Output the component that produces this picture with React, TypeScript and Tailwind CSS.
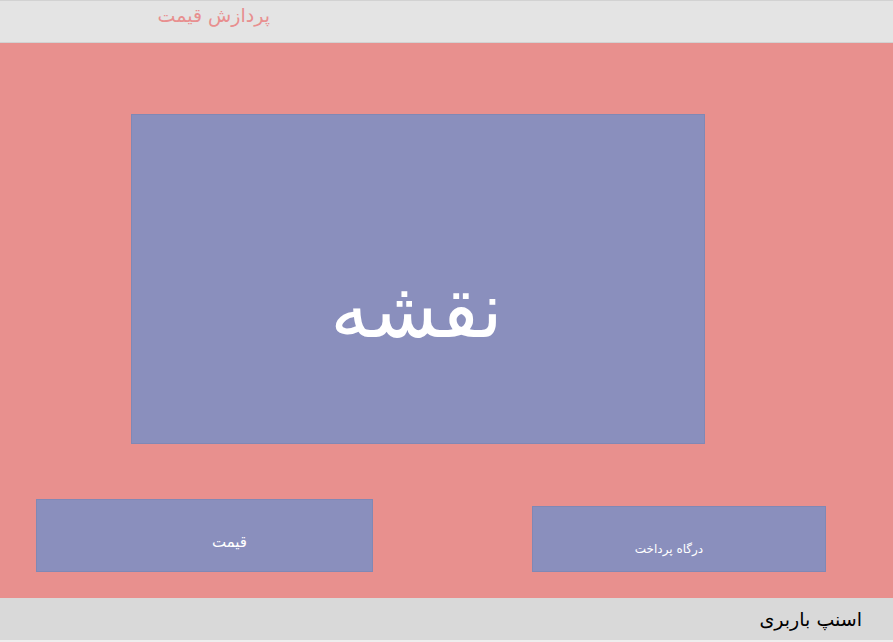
export default function App() {
  return (
    <div className="flex h-[642px] w-[893px] flex-col font-['DejaVu_Sans',sans-serif]">
      <header className="h-[43px] shrink-0 border-t border-b border-[#d2d2d2] bg-[#e4e4e4]">
        <div dir="rtl" className="ml-[154px] mt-[1px] w-[116px] text-[19px] leading-[26px] text-[#e88f8f]">
          پردازش قیمت
        </div>
      </header>
      <main className="flex flex-1 flex-col bg-[#e8908e]">
        <div className="ml-[131px] mt-[71px] flex h-[330px] w-[574px] items-center justify-center border border-[#8088b5] bg-[#8a8fbd]">
          <span dir="rtl" className="ml-[-3px] mt-[62px] text-[78px] leading-none text-white">
            نقشه
          </span>
        </div>
        <div className="mt-auto mb-[26px] flex items-end">
          <div className="ml-[36px] flex h-[73px] w-[337px] items-center justify-center border border-[#8088b5] bg-[#8a8fbd]">
            <span dir="rtl" className="mt-[14px] ml-[50px] text-[15px] text-white">
              قیمت
            </span>
          </div>
          <div className="ml-[159px] flex h-[66px] w-[294px] items-center justify-center border border-[#8088b5] bg-[#8a8fbd]">
            <span dir="rtl" className="mt-[19px] ml-[-20px] text-[12px] text-white">
              درگاه پرداخت
            </span>
          </div>
        </div>
      </main>
      <footer className="flex h-[44px] shrink-0 items-center justify-end border-b-2 border-[#eeeeee] bg-[#d9d9d9] pr-[31px]">
        <span dir="rtl" className="text-[19px] text-black">
          اسنپ باربری
        </span>
      </footer>
    </div>
  );
}
